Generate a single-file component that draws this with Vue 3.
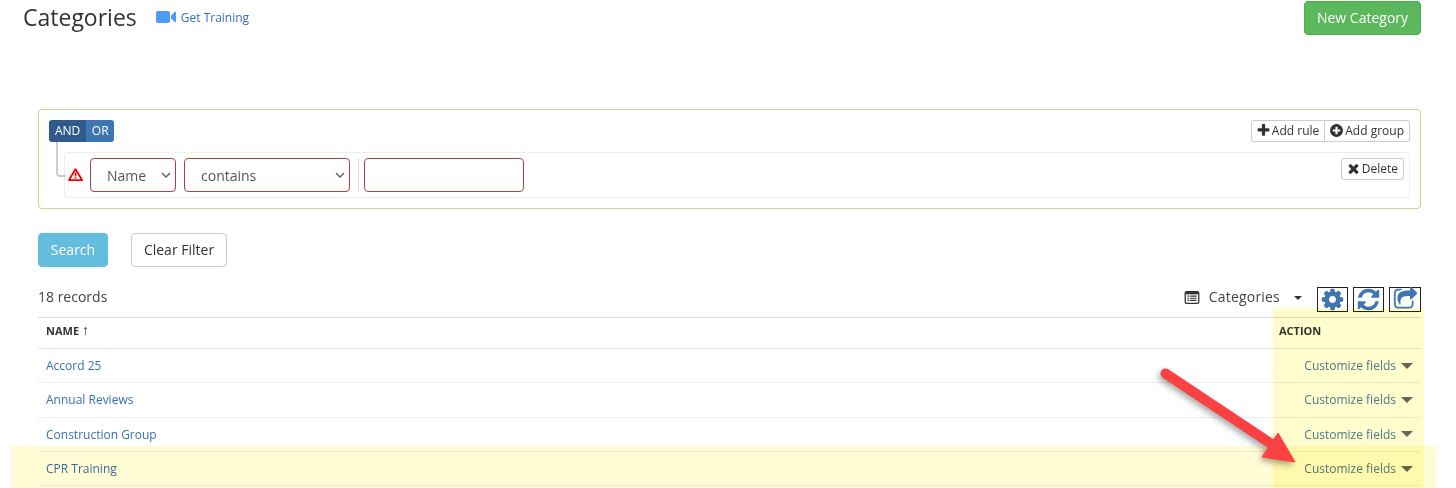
<template>
  <div class="page">
    <header class="page-head">
      <div class="title-wrap">
        <h1 class="title">Categories</h1>
        <a class="training" href="#">
          <svg class="video-icon" viewBox="0 0 20 12" width="20" height="12">
            <rect x="0" y="0" width="14" height="12" rx="2" fill="#4c9aff" />
            <path d="M15 4.5 19 .8a.6.6 0 0 1 1 .4v9.6a.6.6 0 0 1-1 .4L15 7.5z" fill="#4c9aff" />
          </svg>
          Get Training
        </a>
      </div>
      <button class="btn-new">New Category</button>
    </header>

    <section class="builder">
      <div class="group-head">
        <div class="and-or">
          <span class="seg active">AND</span>
          <span class="seg">OR</span>
        </div>
        <div class="add-btns">
          <button class="mini">
            <svg class="fa" viewBox="0 0 1792 1792"><path :d="icons.plus" /></svg>
            Add rule
          </button>
          <button class="mini">
            <svg class="fa" viewBox="0 0 1792 1792"><path :d="icons.plusCircle" /></svg>
            Add group
          </button>
        </div>
      </div>
      <div class="rule">
        <span class="connector"></span>
        <svg class="warn" viewBox="0 0 16 14" width="15" height="13">
          <path d="M8 1.2 15 13H1z" fill="#fff" stroke="#f00000" stroke-width="2" stroke-linejoin="round" />
          <rect x="7.1" y="4.8" width="1.8" height="4.2" fill="#f00000" />
          <rect x="7.1" y="9.8" width="1.8" height="1.6" fill="#f00000" />
        </svg>
        <select class="field field-name">
          <option>Name</option>
        </select>
        <select class="field field-op">
          <option>contains</option>
        </select>
        <span class="divider"></span>
        <input class="field field-value" type="text" />
        <button class="mini delete">
          <svg class="fa" viewBox="0 0 1792 1792"><path :d="icons.times" /></svg>
          Delete
        </button>
      </div>
    </section>

    <div class="actions">
      <button class="btn-search">Search</button>
      <button class="btn-clear">Clear Filter</button>
    </div>

    <div class="toolbar">
      <span class="records">18 records</span>
      <div class="tools">
        <svg class="list-icon" viewBox="0 0 16 14" width="16" height="13">
          <rect x=".7" y=".7" width="14.6" height="12.6" rx="1.5" fill="none" stroke="#333" stroke-width="1.4" />
          <rect x="1" y="1" width="14" height="2.6" fill="#333" />
          <path d="M3 5.5h2M6 5.5h7M3 7.8h2M6 7.8h7M3 10.1h2M6 10.1h7" stroke="#333" stroke-width="1.2" />
        </svg>
        <span class="view-name">Categories</span>
        <span class="view-caret"></span>
        <button v-for="t in tools" :key="t" class="tool-btn">
          <svg viewBox="0 0 1792 1792" width="25" height="25"><path :d="icons[t]" /></svg>
        </button>
      </div>
    </div>

    <table class="grid">
      <thead>
        <tr>
          <th>NAME <span class="sort">↑</span></th>
          <th class="col-action">ACTION</th>
        </tr>
      </thead>
      <tbody>
        <tr v-for="row in rows" :key="row">
          <td><a href="#">{{ row }}</a></td>
          <td class="col-action">
            <a class="customize" href="#">Customize fields<span class="caret"></span></a>
          </td>
        </tr>
      </tbody>
    </table>

    <div class="hl hl-col"></div>
    <div class="hl hl-row"></div>
    <svg class="arrow" viewBox="0 0 150 105" width="150" height="105">
      <path d="M10.5 8.5 118 80" stroke="#fb4141" stroke-width="10" stroke-linecap="round" />
      <path d="M123 68 140 97 107 92z" fill="#fb4141" stroke="#fb4141" stroke-width="1" />
    </svg>
  </div>
</template>

<script setup>
const icons = {
  plus: 'M1600 736v192q0 40-28 68t-68 28h-416v416q0 40-28 68t-68 28h-192q-40 0-68-28t-28-68v-416h-416q-40 0-68-28t-28-68v-192q0-40 28-68t68-28h416v-416q0-40 28-68t68-28h192q40 0 68 28t28 68v416h416q40 0 68 28t28 68z',
  plusCircle: 'M1344 960v-128q0-26-19-45t-45-19h-256v-256q0-26-19-45t-45-19h-128q-26 0-45 19t-19 45v256h-256q-26 0-45 19t-19 45v128q0 26 19 45t45 19h256v256q0 26 19 45t45 19h128q26 0 45-19t19-45v-256h256q26 0 45-19t19-45zm320-64q0 209-103 385.5t-279.5 279.5-385.5 103-385.5-103-279.5-279.5-103-385.5 103-385.5 279.5-279.5 385.5-103 385.5 103 279.5 279.5 103 385.5z',
  times: 'M1490 1322q0 40-28 68l-136 136q-28 28-68 28t-68-28l-294-294-294 294q-28 28-68 28t-68-28l-136-136q-28-28-28-68t28-68l294-294-294-294q-28-28-28-68t28-68l136-136q28-28 68-28t68 28l294 294 294-294q28-28 68-28t68 28l136 136q28 28 28 68t-28 68l-294 294 294 294q28 28 28 68z',
  cog: 'M1152 896q0-106-75-181t-181-75-181 75-75 181 75 181 181 75 181-75 75-181zm512-109v222q0 12-8 23t-20 13l-185 28q-19 54-39 91 35 50 107 138 10 12 10 25t-9 23q-27 37-99 108t-94 71q-12 0-26-9l-138-108q-44 23-91 38-16 136-29 186-7 28-36 28h-222q-14 0-24.5-8.5t-11.5-21.5l-28-184q-49-16-90-37l-141 107q-10 9-25 9-14 0-25-11-126-114-165-168-7-10-7-23 0-12 8-23 15-21 51-66.5t54-70.5q-27-50-41-99l-183-27q-13-2-21-12.5t-8-23.5v-222q0-12 8-23t19-13l186-28q14-46 39-92-40-57-107-138-10-12-10-24 0-10 9-23 26-36 98.5-107.5t94.5-71.5q13 0 26 10l138 107q44-23 91-38 16-136 29-186 7-28 36-28h222q14 0 24.5 8.5t11.5 21.5l28 184q49 16 90 37l142-107q9-9 24-9 13 0 25 10 129 119 165 170 7 8 7 22 0 12-8 23-15 21-51 66.5t-54 70.5q26 50 41 98l183 28q13 2 21 12.5t8 23.5z',
  refresh: 'M1639 1056q0 5-1 7-64 268-268 434.5t-478 166.5q-146 0-282.5-55t-243.5-157l-129 129q-19 19-45 19t-45-19-19-45v-448q0-26 19-45t45-19h448q26 0 45 19t19 45-19 45l-137 137q71 66 161 102t187 36q134 0 250-65t186-179q11-17 53-117 8-23 30-23h192q13 0 22.5 9.5t9.5 22.5zm25-800v448q0 26-19 45t-45 19h-448q-26 0-45-19t-19-45 19-45l138-138q-148-137-349-137-134 0-250 65t-186 179q-11 17-53 117-8 23-30 23h-199q-13 0-22.5-9.5t-9.5-22.5v-7q65-268 270-434.5t480-166.5q146 0 284 55.5t245 156.5l130-129q19-19 45-19t45 19 19 45z',
  share: 'M1472 989v259q0 119-84.5 203.5t-203.5 84.5h-832q-119 0-203.5-84.5t-84.5-203.5v-832q0-119 84.5-203.5t203.5-84.5h255q13 0 22.5 9.5t9.5 22.5q0 27-26 32-77 26-133 60-10 4-16 4h-112q-66 0-113 47t-47 113v832q0 66 47 113t113 47h832q66 0 113-47t47-113v-214q0-19 18-29 28-13 54-37 16-16 35-8 21 9 21 29zm237-496l-384 384q-18 19-45 19-12 0-25-5-39-17-39-59v-192h-160q-323 0-438 131-119 137-74 473 3 23-20 34-8 2-12 2-16 0-26-13-10-14-21-31t-39.5-68.5-49.5-99.5-38.5-114-17.5-122q0-49 3.5-91t14-90 28-88 47-81.5 68.5-74 94.5-61.5 124.5-48.5 159.5-30.5 196.5-11h160v-192q0-42 39-59 13-5 25-5 26 0 45 19l384 384q19 19 19 45t-19 45z'
}

const tools = ['cog', 'refresh', 'share']
const rows = ['Accord 25', 'Annual Reviews', 'Construction Group', 'CPR Training']
</script>

<style scoped>
.page {
  position: relative;
  box-sizing: border-box;
  width: 1456px;
  height: 488px;
  padding: 0 35px 0 38px;
  overflow: hidden;
  background: #fff;
  color: #333;
  font-family: "Open Sans", sans-serif;
  font-size: 14px;
}

.page-head {
  display: flex;
  justify-content: space-between;
  align-items: flex-start;
  height: 109px;
  margin-left: -15px;
  padding-top: 1px;
  box-sizing: border-box;
}

.title-wrap {
  display: flex;
  align-items: center;
  gap: 19px;
  height: 32px;
}

.title {
  margin: 0;
  font-size: 23px;
  font-weight: 400;
  line-height: 32px;
  color: #333;
}

.training {
  display: flex;
  align-items: center;
  gap: 5px;
  font-size: 12px;
  color: #3a6db5;
  text-decoration: none;
}

.btn-new {
  width: 117px;
  height: 34px;
  padding: 0 0 2px;
  border: 1px solid #4cae4c;
  border-radius: 4px;
  background: #5cb85c;
  color: #fff;
  font: 500 14px "Open Sans", sans-serif;
}

.builder {
  box-sizing: border-box;
  height: 100px;
  padding: 10px;
  border: 1px solid #dcc896;
  border-radius: 4px;
}

.group-head {
  display: flex;
  justify-content: space-between;
  height: 22px;
  margin-bottom: 10px;
}

.and-or {
  display: flex;
  border-radius: 3px;
  overflow: hidden;
}

.seg {
  padding: 0 5.5px;
  background: #3f75b3;
  color: #fff;
  font-size: 12px;
  line-height: 22px;
}

.seg.active {
  padding: 0 6px;
  background: #2e5a8c;
}

.add-btns {
  display: flex;
}

.mini {
  display: flex;
  align-items: center;
  gap: 1px;
  height: 22px;
  padding: 0 5px 2px 5px;
  border: 1px solid #ccc;
  background: #fff;
  color: #333;
  font: 12px "Open Sans", sans-serif;
}

.add-btns .mini:first-child {
  border-radius: 3px 0 0 3px;
}

.add-btns .mini:last-child {
  margin-left: -1px;
  border-radius: 0 3px 3px 0;
}

.fa {
  width: 15px;
  height: 15px;
  margin-left: -1px;
  fill: #333;
}

.rule {
  position: relative;
  display: flex;
  align-items: center;
  box-sizing: border-box;
  height: 46px;
  margin-left: 15px;
  padding: 0 5px 0 3px;
  border: 1px solid #eee;
  border-radius: 4px;
}

.connector {
  position: absolute;
  left: -9px;
  top: -11px;
  width: 8px;
  height: 33px;
  border-left: 2px solid #ccc;
  border-bottom: 2px solid #ccc;
  border-bottom-left-radius: 4px;
}

.warn {
  flex: none;
  margin-right: 7px;
  margin-bottom: 2px;
}

.field {
  box-sizing: border-box;
  height: 34px;
  border: 1px solid #a94442;
  border-radius: 4px;
  background-color: #fff;
  color: #555;
  font: 14px "Open Sans", sans-serif;
}

select.field {
  appearance: none;
  padding-left: 16px;
  background-image: url("data:image/svg+xml,%3Csvg xmlns='http://www.w3.org/2000/svg' width='10' height='6'%3E%3Cpath d='M1 1l4 4 4-4' fill='none' stroke='%23666' stroke-width='1.5'/%3E%3C/svg%3E");
  background-repeat: no-repeat;
  background-position: right 4px center;
}

.field-name {
  width: 86px;
}

.field-op {
  width: 166px;
  margin-left: 8px;
}

.divider {
  width: 1px;
  height: 34px;
  margin: 0 5px 0 8px;
  background: #ddd;
}

.field-value {
  width: 160px;
  padding: 0 12px;
}

.delete {
  margin-left: auto;
  border-radius: 3px;
  align-self: flex-start;
  margin-top: 5px;
}

.actions {
  display: flex;
  gap: 23px;
  margin-top: 24px;
}

.btn-search {
  width: 70px;
  height: 34px;
  padding: 0 0 2px;
  border: 1px solid #5bc0de;
  border-radius: 4px;
  background: #65bddd;
  color: #fff;
  font: 14px "Open Sans", sans-serif;
}

.btn-clear {
  width: 96px;
  height: 34px;
  padding: 0 0 2px;
  border: 1px solid #ccc;
  border-radius: 4px;
  background: #fff;
  color: #333;
  font: 14px "Open Sans", sans-serif;
}

.toolbar {
  display: flex;
  justify-content: space-between;
  align-items: center;
  height: 25px;
  margin-top: 20px;
  margin-bottom: 5px;
}

.records {
  margin-bottom: 7px;
  color: #444;
}

.tools {
  display: flex;
  align-items: center;
}

.list-icon {
  margin-bottom: 5px;
}

.view-name {
  margin-left: 9px;
  margin-bottom: 7px;
  letter-spacing: 0.2px;
  color: #444;
}

.view-caret {
  width: 0;
  height: 0;
  margin: 0 15px 3px 14px;
  border-top: 4px solid #333;
  border-left: 4px solid transparent;
  border-right: 4px solid transparent;
}

.tool-btn {
  display: flex;
  align-items: center;
  justify-content: center;
  box-sizing: border-box;
  width: 31px;
  height: 25px;
  margin-left: 5px;
  padding: 0;
  border: 1px solid #222;
  background: #fff;
}

.tool-btn:first-of-type {
  margin-left: 0;
}

.tool-btn:last-of-type {
  width: 32px;
}

.tool-btn svg {
  fill: #3f75b3;
}

.grid {
  width: 100%;
  border-collapse: collapse;
  font-size: 12px;
}

.grid th {
  height: 31px;
  padding: 0 8px 5px;
  box-sizing: border-box;
  border-top: 1px solid #ddd;
  border-bottom: 1px solid #e4e9ee;
  text-align: left;
  font-size: 11px;
  font-weight: 700;
  color: #333;
}

.grid td {
  height: 33.3px;
  padding: 0 8px;
  border-bottom: 1px solid #e8eef2;
}

.grid a {
  color: #3a6db5;
  text-decoration: none;
}

.sort {
  font-size: 14px;
  line-height: 10px;
}

.col-action {
  width: 134px;
}

.grid td.col-action {
  text-align: right;
}

.grid a.customize {
  display: inline-flex;
  align-items: center;
  color: #4d7ba8;
}

.caret {
  width: 0;
  height: 0;
  margin-left: 5px;
  border-top: 6px solid #666;
  border-left: 6px solid transparent;
  border-right: 6px solid transparent;
}

.hl {
  position: absolute;
  mix-blend-mode: multiply;
  pointer-events: none;
}

.hl-col {
  left: 1273px;
  top: 308px;
  width: 151px;
  height: 180px;
  background: #fffcce;
}

.hl-row {
  left: 11px;
  top: 446px;
  width: 1426px;
  height: 42px;
  background: #fffcd6;
}

.arrow {
  position: absolute;
  left: 1155px;
  top: 365px;
  overflow: visible;
  filter: drop-shadow(-2px 3px 3px rgba(0, 0, 0, 0.35));
}
</style>
